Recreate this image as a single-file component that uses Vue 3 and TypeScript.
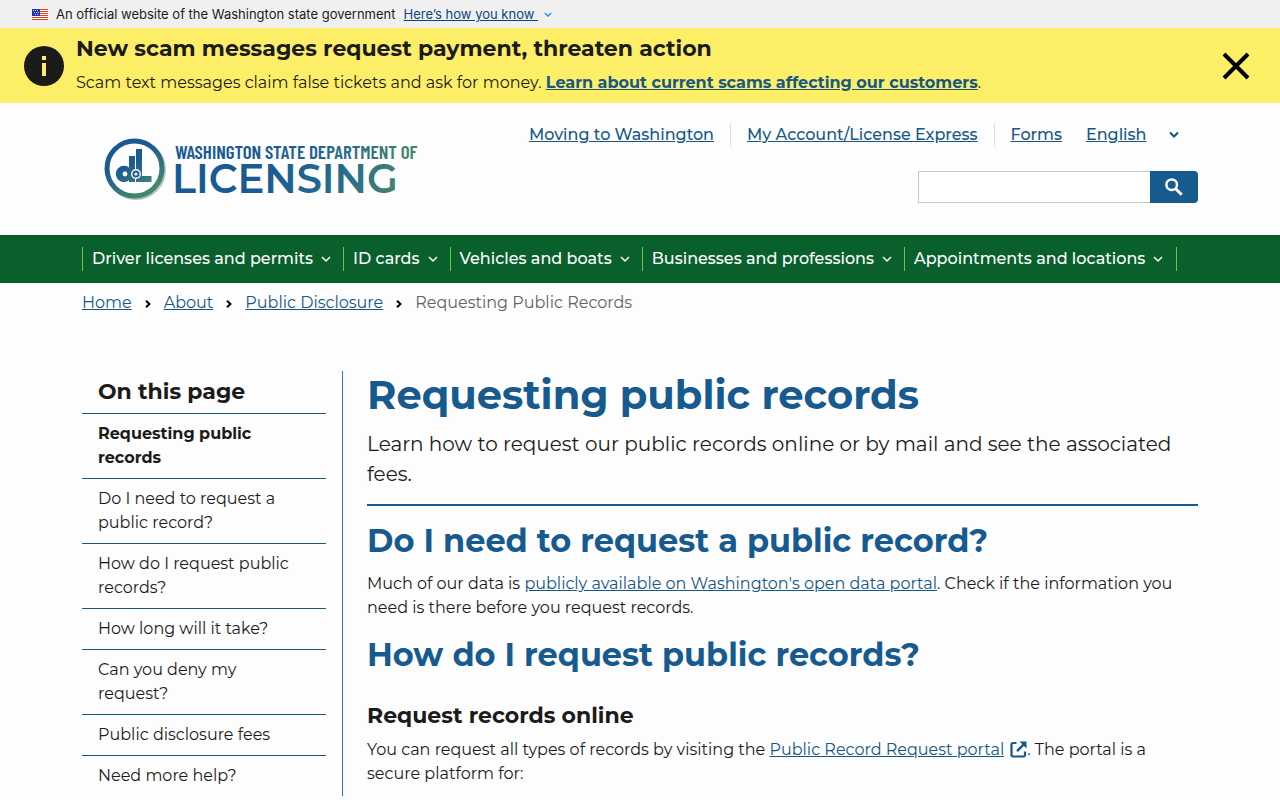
<script setup lang="ts">
import { ref } from 'vue'

interface Section {
  id: string
  label: string
}

const navItems: string[] = [
  'Driver licenses and permits',
  'ID cards',
  'Vehicles and boats',
  'Businesses and professions',
  'Appointments and locations',
]

const utilityLinks: string[] = ['Moving to Washington', 'My Account/License Express', 'Forms']
const crumbs: string[] = ['Home', 'About', 'Public Disclosure']

const sections: Section[] = [
  { id: 'top', label: 'Requesting public records' },
  { id: 'need', label: 'Do I need to request a public record?' },
  { id: 'how', label: 'How do I request public records?' },
  { id: 'time', label: 'How long will it take?' },
  { id: 'deny', label: 'Can you deny my request?' },
  { id: 'fees', label: 'Public disclosure fees' },
  { id: 'help', label: 'Need more help?' },
]

const activeSection = ref('top')
const alertOpen = ref(true)
const query = ref('')
const language = ref('English')
const stripes: number[] = [0, 2, 4, 6, 8, 10]
const stars: [number, number][] = [
  [1, 1], [3, 1], [5, 1], [2, 3], [4, 3], [6, 3], [3, 5], [5, 5],
]
</script>

<template>
  <div class="page">
    <div class="gov-banner">
      <svg class="flag" viewBox="0 0 16 11" width="16" height="11" aria-hidden="true">
        <rect width="16" height="11" fill="#fff" />
        <rect v-for="y in stripes" :key="y" :y="y" width="16" height="1" fill="#db3e1f" />
        <rect width="8" height="7" fill="#1e33b1" />
        <rect v-for="(s, i) in stars" :key="i" :x="s[0]" :y="s[1]" width="1" height="1" fill="#cfd6f5" />
      </svg>
      <span>An official website of the Washington state government</span>
      <button type="button" class="know">
        <span class="know-text">Here’s how you know&nbsp;</span>
        <svg viewBox="0 0 10 6" width="8" height="5" aria-hidden="true">
          <path d="M1 1l4 4 4-4" fill="none" stroke="#2491ff" stroke-width="1.8" />
        </svg>
      </button>
    </div>

    <section v-if="alertOpen" class="alert" aria-label="Site alert">
      <svg class="info" viewBox="0 0 40 40" width="40" height="40" aria-hidden="true">
        <circle cx="20" cy="20" r="20" fill="#1b1b1b" />
        <path d="M18 10h4v4h-4zM18 17h4v13h-4z" fill="#fcee68" />
      </svg>
      <div class="alert-body">
        <h2>New scam messages request payment, threaten action</h2>
        <p>
          Scam text messages claim false tickets and ask for money.
          <a href="#scams">Learn about current scams affecting our customers</a>.
        </p>
      </div>
      <button type="button" class="close" aria-label="Close alert" @click="alertOpen = false">
        <svg viewBox="0 0 28 28" width="28" height="28" aria-hidden="true">
          <path d="M2 2l24 24M26 2L2 26" stroke="#000" stroke-width="4" fill="none" />
        </svg>
      </button>
    </section>

    <header class="container site-header">
      <a class="logo" href="#home" aria-label="Washington State Department of Licensing">
        <svg viewBox="0 0 316 64" width="316" height="64">
          <defs>
            <linearGradient id="ring" x1="0" y1="0" x2="0.6" y2="1">
              <stop offset="0.4" stop-color="#195a95" />
              <stop offset="1" stop-color="#43876b" />
            </linearGradient>
            <linearGradient id="mark" gradientUnits="userSpaceOnUse" x1="24" y1="16" x2="46" y2="50">
              <stop offset="0.2" stop-color="#195a95" />
              <stop offset="1" stop-color="#43876b" />
            </linearGradient>
            <linearGradient id="word" gradientUnits="userSpaceOnUse" x1="160" y1="0" x2="312" y2="50">
              <stop offset="0" stop-color="#195a95" />
              <stop offset="0.5" stop-color="#24698d" />
              <stop offset="1" stop-color="#4c8b64" />
            </linearGradient>
          </defs>
          <circle cx="32" cy="32" r="28" fill="none" stroke="#b9c3c0" stroke-width="4" />
          <circle cx="30.5" cy="30.5" r="27.5" fill="#fdfdfd" stroke="url(#ring)" stroke-width="5" />
          <g fill="url(#mark)">
            <circle cx="20" cy="36" r="8.2" />
            <rect x="25" y="18" width="6" height="26" />
            <rect x="32" y="11" width="6" height="33" />
            <rect x="32" y="38" width="15.5" height="6" />
          </g>
          <circle cx="21" cy="36" r="2.4" fill="#fdfdfd" />
          <circle cx="32" cy="36" r="5" fill="#fdfdfd" />
          <circle cx="32" cy="36" r="2.6" fill="none" stroke="#1d6092" stroke-width="2" />
          <text class="logo-small" x="71" y="21" fill="url(#word)">WASHINGTON STATE DEPARTMENT OF</text>
          <text class="logo-large" x="68" y="55" fill="url(#word)">LICENSING</text>
        </svg>
      </a>
      <div class="header-tools">
        <div class="utility">
          <ul>
            <li v-for="link in utilityLinks" :key="link"><a href="#utility">{{ link }}</a></li>
          </ul>
          <div class="language">
            <select v-model="language" aria-label="Language">
              <option>English</option>
              <option>Español</option>
            </select>
            <svg viewBox="0 0 10 8" width="10" height="8" aria-hidden="true">
              <path d="M1 1.5l4 4 4-4" fill="none" stroke="#165788" stroke-width="2" />
            </svg>
          </div>
        </div>
        <form class="search" role="search" @submit.prevent>
          <input v-model="query" type="search" aria-label="Search" />
          <button type="submit" aria-label="Submit search">
            <svg viewBox="0 0 18 18" width="18" height="18" aria-hidden="true">
              <circle cx="6.7" cy="6.7" r="5.3" fill="none" stroke="#fff" stroke-width="2.5" />
              <path d="M10.7 10.7l6 6" stroke="#fff" stroke-width="3" />
            </svg>
          </button>
        </form>
      </div>
    </header>

    <nav class="main-nav" aria-label="Main">
      <ul class="container">
        <li v-for="item in navItems" :key="item">
          <button type="button">
            {{ item }}
            <svg viewBox="0 0 10 8" width="10" height="8" aria-hidden="true">
              <path d="M1 2l4 4 4-4" fill="none" stroke="#fff" stroke-width="1.5" />
            </svg>
          </button>
        </li>
      </ul>
    </nav>

    <nav class="container crumbs" aria-label="Breadcrumb">
      <ol>
        <li v-for="crumb in crumbs" :key="crumb">
          <a href="#crumb">{{ crumb }}</a>
          <svg viewBox="0 0 6 8" width="6" height="8" aria-hidden="true">
            <path d="M1 0.8l3.4 3.2L1 7.2" fill="none" stroke="#000" stroke-width="2" />
          </svg>
        </li>
        <li aria-current="page">Requesting Public Records</li>
      </ol>
    </nav>

    <div class="container columns">
      <aside>
        <h2>On this page</h2>
        <ul>
          <li v-for="section in sections" :key="section.id">
            <a
              :href="'#' + section.id"
              :class="{ active: activeSection === section.id }"
              @click="activeSection = section.id"
            >{{ section.label }}</a>
          </li>
        </ul>
      </aside>

      <main>
        <h1 id="top">Requesting public records</h1>
        <p class="lead">Learn how to request our public records online or by mail and see the associated fees.</p>
        <h2 id="need">Do I need to request a public record?</h2>
        <p>
          Much of our data is <a href="#portal">publicly available on Washington's open data portal</a>. Check if the
          information you need is there before you request records.
        </p>
        <h2 id="how">How do I request public records?</h2>
        <h3>Request records online</h3>
        <p>
          You can request all types of records by visiting the
          <a href="#request">Public Record Request portal</a>
          <svg class="external" viewBox="0 0 17 17" width="17" height="17" aria-hidden="true">
            <path d="M6.5 2H3a1.5 1.5 0 0 0-1.5 1.5V14A1.5 1.5 0 0 0 3 15.5H13.5A1.5 1.5 0 0 0 15 14v-3.5" fill="none" stroke="#165788" stroke-width="2.2" />
            <path d="M7 10.2L14 3.2" stroke="#165788" stroke-width="2.4" />
            <path d="M9.5 0.5H16.5V7.5z" fill="#165788" />
          </svg>. The portal is a secure platform for:
        </p>
      </main>
    </div>
  </div>
</template>

<style>
html {
  overflow: hidden;
}
body {
  background: #fdfdfd;
}
</style>

<style scoped>
* {
  box-sizing: border-box;
}
.page {
  font: 400 16px/24px Montserrat, Inter, sans-serif;
  color: #1b1b1b;
}
h1, h2, h3, p, ul, ol {
  margin: 0;
  padding: 0;
}
ul, ol {
  list-style: none;
}
button {
  font: inherit;
  border: 0;
  background: none;
  padding: 0;
  cursor: pointer;
}
a {
  color: #165788;
}
svg {
  flex: none;
}
.container {
  max-width: 1140px;
  margin: 0 auto;
  padding: 0 12px;
}
.gov-banner {
  display: flex;
  align-items: center;
  gap: 8px;
  height: 28px;
  padding: 0 32px;
  background: #f0f0f0;
  font: 400 13px/28px Inter, sans-serif;
}
.know {
  display: flex;
  align-items: center;
  gap: 6px;
  color: #0b4778;
}
.know-text {
  text-decoration: underline;
}
.alert {
  display: flex;
  align-items: center;
  gap: 12px;
  min-height: 75px;
  padding: 0 30px 0 24px;
  background: #fdee68;
}
.alert-body {
  flex: 1;
  padding-bottom: 1px;
}
.alert h2 {
  font-size: 22px;
  line-height: 28px;
  font-weight: 700;
  margin-bottom: 8px;
}
.alert a {
  font-weight: 700;
}
.close {
  display: flex;
}
.site-header {
  display: flex;
  justify-content: space-between;
  align-items: flex-start;
  min-height: 132px;
  padding-top: 20px;
}
.logo {
  display: flex;
  margin: 15px 0 0 22px;
}
.logo svg {
  overflow: visible;
}
.logo-small {
  font: 600 19px "Barlow Condensed", "Roboto Condensed", Oswald, sans-serif;
}
.logo-large {
  font: 600 40px Montserrat, Inter, sans-serif;
}
.header-tools {
  display: flex;
  flex-direction: column;
  align-items: flex-end;
  gap: 24px;
}
.utility {
  display: flex;
  padding-right: 19px;
  font-weight: 500;
}
.utility ul {
  display: flex;
}
.utility li {
  padding: 0 16px;
}
.utility li + li {
  border-left: 1px solid #dcdee0;
}
.language {
  display: flex;
  align-items: center;
  gap: 8px;
  margin-left: 8px;
}
.language select {
  appearance: none;
  width: 75px;
  height: 24px;
  padding: 0;
  border: 0;
  background: transparent;
  color: #165788;
  font: inherit;
  text-decoration: underline;
}
.search {
  display: flex;
  width: 280px;
  height: 32px;
}
.search input {
  flex: 1;
  min-width: 0;
  border: 1px solid #c6c7c9;
  border-right: 0;
  border-radius: 0;
  background: #fff;
  padding: 0 8px;
  font: inherit;
}
.search button {
  display: flex;
  align-items: center;
  justify-content: center;
  width: 48px;
  border-radius: 0 4px 4px 0;
  background: #165a8f;
}
.main-nav {
  background: #0a602d;
}
.main-nav ul {
  display: flex;
  height: 48px;
  align-items: center;
}
.main-nav li {
  padding: 0 12px 0 9px;
  border-left: 1px solid #6cc24a;
}
.main-nav li:last-child {
  padding-right: 13px;
  border-right: 1px solid #6cc24a;
}
.main-nav button {
  display: flex;
  align-items: center;
  gap: 8px;
  color: #fff;
  font-weight: 500;
}
.crumbs ol {
  display: flex;
  padding-top: 8px;
}
.crumbs li {
  display: flex;
  align-items: center;
  color: #5f6368;
}
.crumbs svg {
  margin: 2px 13px 0;
}
.columns {
  display: flex;
  align-items: flex-start;
  gap: 24px;
  padding-top: 56px;
}
aside {
  flex: 0 0 261px;
  padding-right: 16px;
  border-right: 1px solid #2b78b5;
}
aside h2 {
  padding: 6px 16px;
  font-size: 22px;
  line-height: 30px;
  font-weight: 700;
}
aside li {
  border-top: 1px solid #155a80;
}
aside li a {
  display: block;
  padding: 8px 16px;
  color: #1b1b1b;
  text-decoration: none;
}
aside li a.active {
  font-weight: 700;
}
main {
  flex: 1;
  min-width: 0;
}
main h1 {
  color: #165a8f;
  font-size: 40px;
  line-height: 48px;
  font-weight: 700;
  margin-bottom: 10px;
}
.lead {
  font-size: 20px;
  line-height: 30px;
  padding-bottom: 15px;
  border-bottom: 2px solid #165a8f;
}
main h2 {
  color: #165a8f;
  font-size: 32px;
  line-height: 38px;
  font-weight: 700;
  margin: 16px 0 12px;
}
main h3 {
  font-size: 22px;
  line-height: 28px;
  font-weight: 700;
  margin: 28px 0 8px;
}
.external {
  margin-left: 6px;
  vertical-align: -3px;
}
</style>
